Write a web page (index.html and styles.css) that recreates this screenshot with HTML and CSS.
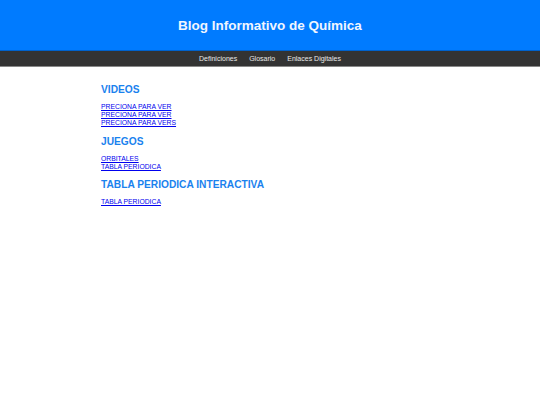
FILE: index.html
```html
<!DOCTYPE html>
<html lang="es">
<head>
<meta charset="utf-8">
<title>Blog Informativo de Química</title>
<link rel="stylesheet" href="styles.css">
</head>
<body>
<header class="site-header">
  <h1 class="site-title">Blog Informativo de Química</h1>
</header>
<nav class="site-nav">
  <a href="#">Definiciones</a>
  <a href="#">Glosario</a>
  <a href="#">Enlaces Digitales</a>
</nav>
<main class="content">
  <section class="group">
    <h2 class="group-title">VIDEOS</h2>
    <ul class="links">
      <li><a href="#">PRECIONA PARA VER</a></li>
      <li><a href="#">PRECIONA PARA VER</a></li>
      <li><a href="#">PRECIONA PARA VERS</a></li>
    </ul>
  </section>
  <section class="group">
    <h2 class="group-title">JUEGOS</h2>
    <ul class="links">
      <li><a href="#">ORBITALES</a></li>
      <li><a href="#">TABLA PERIODICA</a></li>
    </ul>
  </section>
  <section class="group">
    <h2 class="group-title">TABLA PERIODICA INTERACTIVA</h2>
    <ul class="links">
      <li><a href="#">TABLA PERIODICA</a></li>
    </ul>
  </section>
</main>
</body>
</html>
```
FILE: styles.css
```css
html, body {
  margin: 0;
  padding: 0;
  background: #ffffff;
  font-family: "Liberation Sans", Arial, sans-serif;
}
.site-header {
  background: #007bff;
  height: 50px;
  display: flex;
  align-items: center;
  justify-content: center;
  border-bottom: 1px solid #0062cc;
}
.site-title {
  margin: 0;
  color: #f0f6ff;
  font-size: 13.5px;
  font-weight: bold;
}
.site-nav {
  background: #333333;
  height: 15px;
  display: flex;
  align-items: center;
  justify-content: center;
  gap: 12px;
  border-bottom: 1px solid #888888;
}
.site-nav a {
  color: #e8e8e8;
  text-decoration: none;
  font-size: 7px;
}
.content {
  width: 338px;
  margin: 0 auto;
  padding-top: 17px;
}
.group-title {
  margin: 0;
  color: #1a82ee;
  font-size: 10.2px;
  font-weight: bold;
  line-height: 12px;
}
.links {
  list-style: none;
  margin: 7px 0 8.5px 0;
  padding: 0;
}
.links li {
  font-size: 6.8px;
  line-height: 8px;
}
.links a {
  color: #0000ee;
}
```
